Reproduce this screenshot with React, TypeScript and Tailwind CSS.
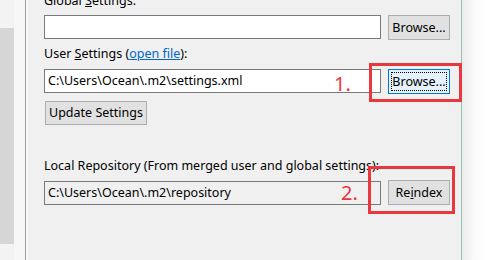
export default function App() {
  const font = { fontFamily: '"Noto Sans", "Open Sans", sans-serif' };

  return (
    <div
      className="relative flex h-[260px] w-[487px] overflow-hidden bg-[#f0f0f0] text-[12.5px] text-black"
      style={font}
    >
      {/* left tree strip */}
      <div className="flex w-[14px] flex-col">
        <div className="h-[28px] bg-[#f3f3f3]" />
        <div className="h-[216px] bg-[#d6d6d6]" />
        <div className="flex-1 bg-[#f3f3f3]" />
      </div>
      <div className="w-[11px] bg-[#f7f7f7]" />
      <div className="w-px bg-[#a0a0a0]" />

      {/* settings panel */}
      <div className="flex w-[435px] flex-col border-l-2 border-[#fafafa] bg-[#f0f0f0] pl-[16px]">
        {/* GLOBAL */}
        <div className="-mt-[7px] h-[16px] leading-[16px]">
          Global <span className="underline">S</span>ettings:
        </div>
        <div className="mt-[6px] flex items-start gap-[7px]">
          <div className="h-[24px] w-[337px] border border-[#7a7a7a] bg-white" />
          <button className="h-[25px] w-[62px] border border-[#adadad] bg-[#e1e1e1] leading-[23px]">
            Browse...
          </button>
        </div>

        {/* USER */}
        <div className="mt-[6px] h-[16px] leading-[16px]">
          User <span className="underline">S</span>ettings (
          <span className="text-[#0066cc] underline">open file</span>):
        </div>
        <div className="mt-[7px] flex items-start gap-[7px]">
          <div className="h-[24px] w-[337px] border border-[#7a7a7a] bg-white pl-[3px] leading-[22px]">
            C:\Users\Ocean\.m2\settings.xml
          </div>
          <button className="h-[25px] w-[62px] border border-[#0078d7] bg-[#e5f1fb] p-[2px]">
            <span className="block h-full w-full border border-dotted border-black leading-[17px]">
              Browse...
            </span>
          </button>
        </div>

        {/* UPDATE */}
        <button className="ml-[1px] mt-[7px] h-[24px] w-[102px] border border-[#adadad] bg-[#e1e1e1] leading-[22px]">
          Update Settings
        </button>

        {/* LOCAL */}
        <div className="mt-[33px] h-[16px] leading-[16px]">
          Local Repository (From merged user and global settings):
        </div>
        <div className="mt-[6px] flex items-start gap-[7px]">
          <div className="mt-[1px] h-[24px] w-[337px] border border-[#7a7a7a] bg-[#f0f0f0] pl-[3px] leading-[22px]">
            C:\Users\Ocean\.m2\repository
          </div>
          <button className="h-[25px] w-[62px] border border-[#adadad] bg-[#e1e1e1] leading-[23px]">
            Re<span className="underline">i</span>ndex
          </button>
        </div>
      </div>

      <div className="w-px bg-[#93c2ad]" />
      <div className="flex-1 bg-gradient-to-r from-[#ececec] via-[#fafafa] to-white" />

      {/* annotations */}
      <div className="absolute left-[369px] top-[63px] h-[39px] w-[93px] border-[3px] border-[#e8373d]" />
      <div className="absolute left-[334px] top-[70px] text-[20px] leading-[28px] text-[#e8373d]">1.</div>
      <div className="absolute left-[368px] top-[166px] h-[48px] w-[87px] border-[3px] border-[#e8373d]" />
      <div className="absolute left-[341px] top-[179px] text-[20px] leading-[28px] text-[#e8373d]">2.</div>
    </div>
  );
}
